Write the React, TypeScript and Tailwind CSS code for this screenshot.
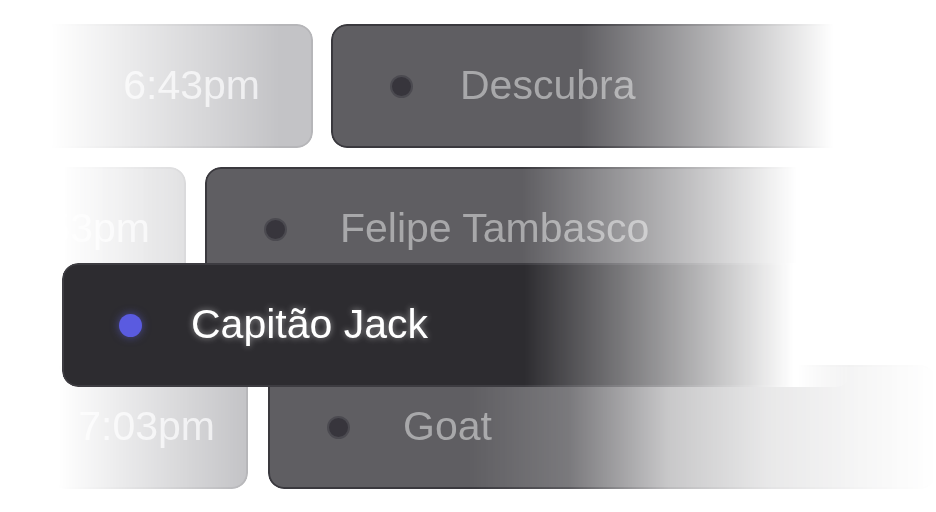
import React from 'react';

function Dot({ active }: { active?: boolean }) {
  if (active) {
    return <span className="w-[23px] h-[23px] shrink-0 rounded-full bg-[#5a5be0] shadow-[0_0_8px_rgba(99,100,235,0.55)]" />;
  }
  return <span className="w-[23px] h-[23px] shrink-0 rounded-full bg-[#37353c] border-2 border-[#4b4a50]" />;
}

function TimeCard({ time, w, pr, mask, extra }: { time: string; w: string; pr: string; mask: string; extra: string }) {
  return (
    <div className={`h-[124px] shrink-0 rounded-2xl border-2 border-[#b6b6b9] bg-[#c3c3c6] flex items-center justify-end ${w} ${pr} ${mask} ${extra}`}>
      <span className="text-[41px] text-[#ececee] whitespace-nowrap">{time}</span>
    </div>
  );
}

function NameCard({ name, w, gap, mask }: { name: string; w: string; gap: string; mask: string }) {
  return (
    <div className={`h-[124px] shrink-0 rounded-2xl border-2 border-[#3a393e] bg-[#5f5e62] flex items-center pl-[57px] ${gap} ${w} ${mask}`}>
      <Dot />
      <span className="text-[41px] text-[#a8a8aa] whitespace-nowrap">{name}</span>
    </div>
  );
}

export default function App() {
  return (
    <div className="w-[936px] h-[512px] bg-white overflow-hidden flex flex-col font-['Liberation_Sans',Arial,sans-serif]">
      {/* linha 1 */}
      <div className="mt-[24px] pl-[40px] flex gap-[18px]">
        <TimeCard
          time="6:43pm"
          w="w-[273px]"
          pr="pr-[51px]"
          mask="[mask-image:linear-gradient(to_right,transparent_4%,black_88%)]"
          extra=""
        />
        <NameCard
          name="Descubra"
          w="w-[529px]"
          gap="gap-[47px]"
          mask="[mask-image:linear-gradient(to_right,black_47%,transparent_95%)]"
        />
      </div>

      {/* linha 2 */}
      <div className="mt-[19px] pl-[40px] flex gap-[19px]">
        <TimeCard
          time="6:53pm"
          w="w-[146px]"
          pr="pr-[34px]"
          mask="[mask-image:linear-gradient(to_right,transparent_15%,black_100%)]"
          extra="opacity-50"
        />
        <NameCard
          name="Felipe Tambasco"
          w="w-[610px]"
          gap="gap-[53px]"
          mask="[mask-image:linear-gradient(to_right,black_52%,transparent_97%)]"
        />
      </div>

      {/* selecionado */}
      <div className="-mt-[28px] pl-[62px] relative z-10 flex">
        <div className="w-[790px] h-[124px] rounded-2xl bg-white [mask-image:linear-gradient(to_right,black_93%,transparent_100%)]">
          <div className="w-[770px] h-full rounded-2xl border-2 border-[#3d3c41] bg-[#2d2c30] flex items-center pl-[55px] gap-[49px] [mask-image:linear-gradient(to_right,black_60%,transparent_95%)]">
            <Dot active />
            <span className="text-[41px] text-white whitespace-nowrap [text-shadow:0_0_6px_rgba(255,255,255,0.5)]">Capitão Jack</span>
          </div>
        </div>
      </div>

      {/* linha 4 */}
      <div className="-mt-[22px] pl-[50px] flex gap-[20px]">
        <TimeCard
          time="7:03pm"
          w="w-[198px]"
          pr="pr-[31px]"
          mask="[mask-image:linear-gradient(to_right,transparent_4%,black_100%)]"
          extra=""
        />
        <NameCard
          name="Goat"
          w="w-[668px]"
          gap="gap-[53px]"
          mask="[mask-image:linear-gradient(to_right,black_30%,rgba(0,0,0,0.83)_45%,rgba(0,0,0,0.34)_60%,rgba(0,0,0,0.14)_75%,rgba(0,0,0,0.05)_90%,transparent_100%)]"
        />
      </div>
    </div>
  );
}
